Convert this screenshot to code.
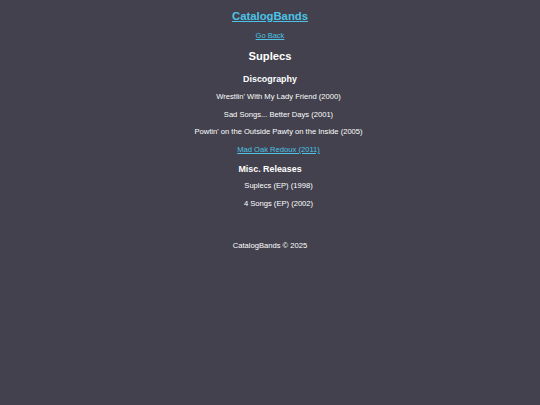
import React from 'react';

const discography = [
  { title: "Wrestlin' With My Lady Friend (2000)" },
  { title: 'Sad Songs... Better Days (2001)' },
  { title: "Powtin' on the Outside Pawty on the Inside (2005)" },
  { title: 'Mad Oak Redoux (2011)', link: true },
];

const misc = ['Suplecs (EP) (1998)', '4 Songs (EP) (2002)'];

export default function App() {
  return (
    <div
      className="min-h-[405px] w-full bg-[#42414d] text-center text-white"
      style={{ fontFamily: '"Liberation Sans", Arial, sans-serif' }}
    >
      <header className="pt-[8px] text-[11.3px] font-bold leading-[16px]">
        <a href="#" className="text-[#4cc3e6] underline">
          CatalogBands
        </a>
      </header>

      <main>
        <div className="mt-[3.5px] text-[7.5px] leading-[16px]">
          <a href="#" className="text-[#4cc3e6] underline">
            Go Back
          </a>
        </div>

        <h1 className="mt-[4.5px] text-[11.2px] font-bold leading-[16px]">Suplecs</h1>

        <h2 className="mt-[6.8px] text-[8.9px] font-bold leading-[16px]">Discography</h2>
        <ul className="mt-[1px] pl-[17px] text-[7.6px] leading-[17.7px]">
          {discography.map((album) => (
            <li key={album.title}>
              {album.link ? (
                <a href="#" className="text-[#4cc3e6] underline">
                  {album.title}
                </a>
              ) : (
                album.title
              )}
            </li>
          ))}
        </ul>

        <h2 className="mt-[2px] text-[8.9px] font-bold leading-[16px]">Misc. Releases</h2>
        <ul className="mt-[0.8px] pl-[17px] text-[7.6px] leading-[17.7px]">
          {misc.map((release) => (
            <li key={release}>{release}</li>
          ))}
        </ul>
      </main>

      <footer className="mt-[25.5px] text-[7.6px] leading-[16px]">CatalogBands © 2025</footer>
    </div>
  );
}
